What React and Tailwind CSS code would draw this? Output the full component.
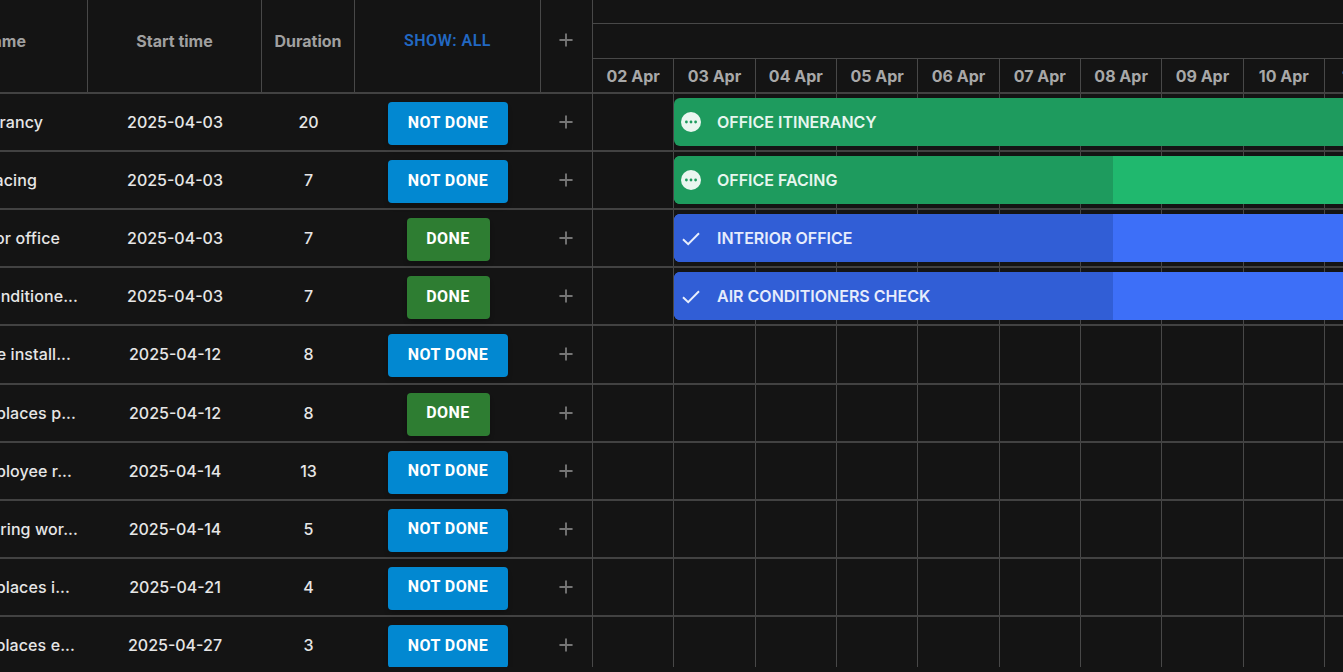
import React from "react";
import { Plus } from "lucide-react";

const rows = [
  { name: "Office itinerancy", pad: "pr-[45px]", start: "2025-04-03", dur: "20", done: false },
  { name: "Office facing", pad: "pr-[51px]", start: "2025-04-03", dur: "7", done: false },
  { name: "Interior office", pad: "pr-[28px]", start: "2025-04-03", dur: "7", done: true },
  { name: "Air conditione...", pad: "pr-[10px]", start: "2025-04-03", dur: "7", done: true },
  { name: "Wire install...", pad: "pr-[17px]", start: "2025-04-12", dur: "8", done: false },
  { name: "Workplaces p...", pad: "pr-[12px]", start: "2025-04-12", dur: "8", done: true },
  { name: "Employee r...", pad: "pr-[16px]", start: "2025-04-14", dur: "13", done: false },
  { name: "Flooring wor...", pad: "pr-[10px]", start: "2025-04-14", dur: "5", done: false },
  { name: "Workplaces i...", pad: "pr-[18px]", start: "2025-04-21", dur: "4", done: false },
  { name: "Workplaces e...", pad: "pr-[13px]", start: "2025-04-27", dur: "3", done: false },
];

const days = ["02 Apr", "03 Apr", "04 Apr", "05 Apr", "06 Apr", "07 Apr", "08 Apr", "09 Apr", "10 Apr", "11 Apr"];

const bars = [
  { label: "OFFICE ITINERANCY", kind: "green", progress: false },
  { label: "OFFICE FACING", kind: "green", progress: true },
  { label: "INTERIOR OFFICE", kind: "blue", progress: true },
  { label: "AIR CONDITIONERS CHECK", kind: "blue", progress: true },
];

function DotsIcon() {
  return (
    <svg width="20" height="20" viewBox="0 0 20 20" className="shrink-0">
      <circle cx="10" cy="10" r="10" fill="#eaf6f0" />
      <circle cx="5.4" cy="10" r="1.4" fill="#1e9b5e" />
      <circle cx="10" cy="10" r="1.4" fill="#1e9b5e" />
      <circle cx="14.6" cy="10" r="1.4" fill="#1e9b5e" />
    </svg>
  );
}

function CheckIcon() {
  return (
    <svg width="20" height="20" viewBox="0 0 20 20" fill="none" className="shrink-0">
      <path d="M2 11.2 L7.2 16.2 L18 5.2" stroke="#e8eefc" strokeWidth="2" />
    </svg>
  );
}

function Bar({ bar }) {
  const green = bar.kind === "green";
  return (
    <div className={`absolute left-[81px] top-[4px] flex h-[48px] w-[800px] overflow-hidden rounded-md ${green ? "bg-[#20b86e]" : "bg-[#3d6ff8]"}`}>
      <div className={`flex h-full items-center pl-[7px] ${bar.progress ? "w-[439px]" : "w-full"} ${green ? "bg-[#1e9b5e]" : "bg-[#315ed6]"}`}>
        {green ? <DotsIcon /> : <CheckIcon />}
        <span className={`ml-[16px] whitespace-nowrap text-base font-semibold ${green ? "text-[#e6f6ee]" : "text-[#e6ecfc]"}`}>{bar.label}</span>
      </div>
    </div>
  );
}

function StatusButton({ done }) {
  return (
    <button
      className={`mt-[3px] flex h-[43px] items-center justify-center rounded font-['Roboto',sans-serif] text-[16px] font-bold tracking-[0.46px] text-white shadow-md ${done ? "w-[83px] bg-[#2e7d32]" : "w-[120px] bg-[#0288d1]"}`}
    >
      <span className="-mt-[2px]">{done ? "DONE" : "NOT DONE"}</span>
    </button>
  );
}

export default function App() {
  return (
    <div className="h-[672px] w-[1343px] overflow-hidden bg-[#141414] font-['Inter',sans-serif]">
      <div className="flex h-[667px] overflow-hidden">
        {/* Table */}
        <div className="flex w-[593px] shrink-0 flex-col border-r border-[#484848]">
          <div className="flex h-[94px] shrink-0 border-b-2 border-[#424242] text-base font-bold text-[#a0a0a0]">
            <div className="flex w-[88px] shrink-0 items-center justify-end border-r border-[#484848] pb-[11px] pr-[61px]">
              <span className="whitespace-nowrap">Name</span>
            </div>
            <div className="flex w-[174px] shrink-0 items-center justify-center border-r border-[#484848] pb-[11px]">Start time</div>
            <div className="flex w-[93px] shrink-0 items-center justify-center border-r border-[#484848] pb-[11px]">Duration</div>
            <div className="flex w-[186px] shrink-0 items-center justify-center border-r border-[#484848] pb-[11px] font-['Roboto',sans-serif] font-semibold tracking-[0.5px] text-[#2268c2]">
              SHOW: ALL
            </div>
            <div className="flex flex-1 items-center justify-center pb-[12px] pr-[1px] text-[#767676]">
              <Plus size={20} strokeWidth={2.25} />
            </div>
          </div>
          {rows.map((r) => (
            <div key={r.name} className="flex h-[58.12px] shrink-0 items-center border-b-2 border-[#424242] text-base font-medium text-[#e6e6e6]">
              <div className={`flex w-[88px] shrink-0 justify-end overflow-hidden ${r.pad}`}>
                <span className="whitespace-nowrap tracking-[0.1px]">{r.name}</span>
              </div>
              <div className="w-[174px] shrink-0 text-center">{r.start}</div>
              <div className="w-[93px] shrink-0 text-center">{r.dur}</div>
              <div className="flex w-[186px] shrink-0 justify-center">
                <StatusButton done={r.done} />
              </div>
              <div className="flex flex-1 justify-center pr-[1px] text-[#767676]">
                <Plus size={20} strokeWidth={2.25} />
              </div>
            </div>
          ))}
        </div>

        {/* Timeline */}
        <div className="flex min-w-0 flex-1 flex-col overflow-hidden">
          <div className="h-[24px] shrink-0 border-b border-[#484848]" />
          <div className="h-[35px] shrink-0 border-b border-[#484848]" />
          <div className="flex h-[35px] shrink-0 border-b-2 border-[#424242]">
            {days.map((d) => (
              <div key={d} className="flex w-[81.33px] shrink-0 items-center justify-center whitespace-nowrap border-r border-[#484848] text-base font-bold text-[#a8a8a8]">
                {d}
              </div>
            ))}
          </div>
          {rows.map((r, i) => (
            <div key={r.name} className="relative flex h-[58.12px] shrink-0 border-b-2 border-[#424242]">
              {days.map((d) => (
                <div key={d} className="w-[81.33px] shrink-0 border-r border-[#484848]" />
              ))}
              {bars[i] && <Bar bar={bars[i]} />}
            </div>
          ))}
        </div>
      </div>
    </div>
  );
}
